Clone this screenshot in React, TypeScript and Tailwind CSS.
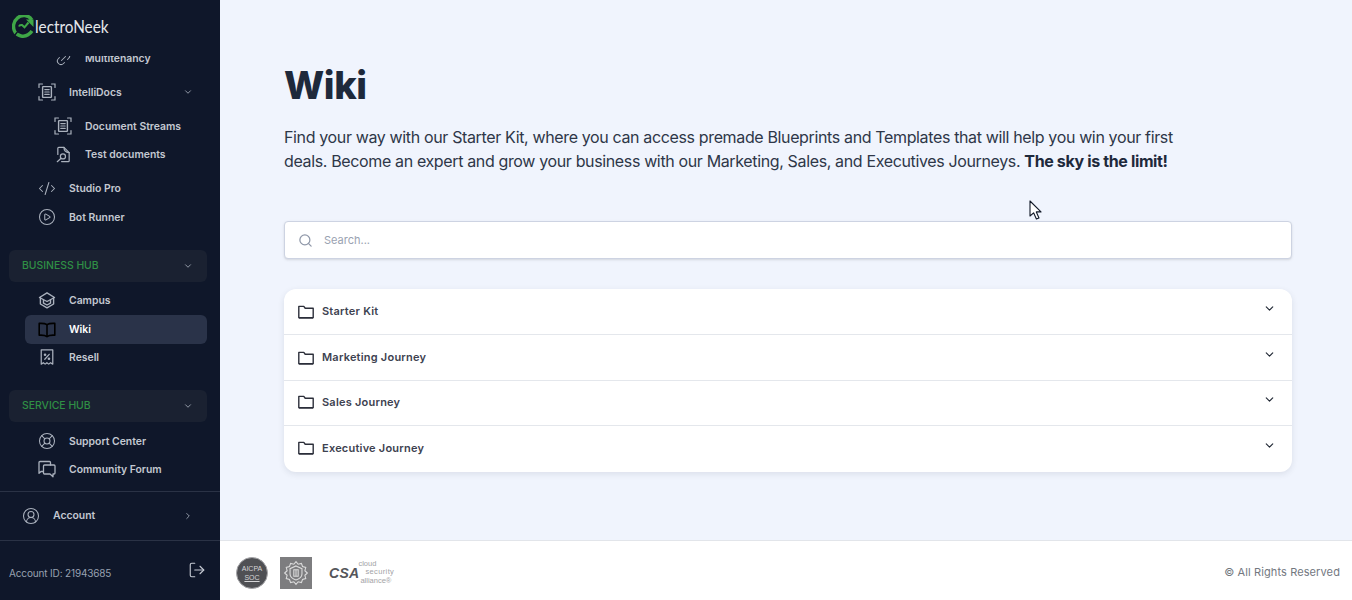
import React from "react";
import {
  ChevronDown, ChevronRight, Search, LifeBuoy, LogOut, CodeXml, CirclePlay, Link2, CircleUserRound,
} from "lucide-react";

const textCls = "text-[10.4px] font-semibold text-[#c3c8d1]";

function Scan({ size = 18 }: { size?: number }) {
  return (
    <svg width={size} height={size} viewBox="0 0 18 18" fill="none" stroke="currentColor" strokeWidth="1.2" strokeLinecap="round">
      <path d="M1 4.500V1h3.500M13.500 1H17v3.500M1 13.500V17h3.500M13.500 17H17v-3.500" />
      <rect x="4.600" y="3.600" width="8.800" height="10.800" rx=".6" strokeWidth="1.400" />
      <path d="M6.800 6.600h4.400M6.800 9h4.400M6.800 11.400h4.400" />
    </svg>
  );
}

function DocSearch({ size = 18 }: { size?: number }) {
  return (
    <svg width={size} height={size} viewBox="0 0 18 18" fill="none" stroke="currentColor" strokeWidth="1.300" strokeLinecap="round" strokeLinejoin="round">
      <path d="M3 9V2.500a1 1 0 0 1 1-1h5.500L15 7v8.500a1 1 0 0 1-1 1H7" />
      <path d="M9.500 1.500c0 3 1.500 5 5.500 5.500" />
      <circle cx="8.400" cy="11" r="2.700" />
      <path d="M6.400 13 2.400 16.600" />
    </svg>
  );
}

function Book({ size = 18 }: { size?: number }) {
  return (
    <svg width={size} height={size} viewBox="0 0 18 18" fill="none" stroke="currentColor" strokeWidth="1.600" strokeLinejoin="round">
      <path d="M9 3.600C7.400 2.600 4.400 2.200 1.200 2.400v11.800c3.200-.2 6.200.2 7.800 1.400 1.600-1.200 4.600-1.600 7.800-1.400V2.400C13.600 2.200 10.600 2.600 9 3.600Z" />
      <path d="M9 3.600v12" />
    </svg>
  );
}

function Chat({ size = 18 }: { size?: number }) {
  return (
    <svg width={size} height={size} viewBox="0 0 18 18" fill="none" stroke="currentColor" strokeWidth="1.300" strokeLinejoin="round" strokeLinecap="round">
      <path d="M5 11.500H3l-2 1.800V2.500a1 1 0 0 1 1-1h9.500a1 1 0 0 1 1 1V5" />
      <path d="M6.500 5H16a1 1 0 0 1 1 1v7a1 1 0 0 1-1 1h-1v2.800L12 14H6.500a1 1 0 0 1-1-1V6a1 1 0 0 1 1-1Z" />
    </svg>
  );
}

function Cap({ size = 18 }: { size?: number }) {
  return (
    <svg width={size} height={size} viewBox="0 0 18 18" fill="none" stroke="currentColor" strokeWidth="1.400" strokeLinejoin="round" strokeLinecap="round">
      <path d="M2.400 6.500V13L9 16.800l6.600-3.800V6.500" />
      <path d="M1.500 6.500 9 1.800l7.500 4.700L9 10.500Z" />
      <path d="M5.500 9v3.200L9 14l3.500-1.800V9" />
    </svg>
  );
}

function ReceiptPct({ size = 18 }: { size?: number }) {
  return (
    <svg width={size} height={size} viewBox="0 0 18 18" fill="none" stroke="currentColor" strokeWidth="1.400" strokeLinejoin="round" strokeLinecap="round">
      <path d="M2.500 1h13v16l-2.600-1.600-2 1.600-2-1.600-2 1.600-2-1.600-2.400 1.600Z" />
      <path d="M6.500 11.500 11.500 6" />
      <circle cx="6.800" cy="6.500" r=".8" />
      <circle cx="11.200" cy="11" r=".8" />
    </svg>
  );
}

function Row({ icon, label, sub, chevron, cls = "h-[28px]" }: { icon: React.ReactNode; label: string; sub?: boolean; chevron?: boolean; cls?: string }) {
  return (
    <div className={`flex items-center ${cls} ${sub ? "pl-[54px]" : "pl-[38px]"} pr-[27px]`}>
      <span className="w-[18px] h-[18px] flex items-center justify-center text-[#aab1bd] shrink-0">{icon}</span>
      <span className={`ml-[13px] flex-1 mt-[2px] ${textCls}`}>{label}</span>
      {chevron && <ChevronDown size={10} className="text-[#aab1bd]" />}
    </div>
  );
}

function Hub({ label, cls }: { label: string; cls: string }) {
  return (
    <div className={`mx-[9px] w-[198px] h-[32px] rounded-md bg-[#1a2131] flex items-center pl-[13px] pr-[14px] ${cls}`}>
      <span className="flex-1 text-[10.4px] font-medium text-[#2f8f45] mt-[-1px]">{label}</span>
      <ChevronDown size={10} className="text-[#aab1bd]" />
    </div>
  );
}

function Sidebar() {
  return (
    <aside className="w-[220px] h-[600px] shrink-0 bg-[#0f172a] flex flex-col">
      <div className="h-[56px] shrink-0 pl-[12px] pt-[15px] flex items-start">
        <svg width="23" height="23" viewBox="0 0 23 23" fill="none" className="shrink-0">
          <path d="M19.800 4.800A9.400 9.400 0 0 0 5.200 3.300C1 6.500.6 13 3 17c2.800 4.300 9 5.400 13 2.800 1.700-1 3-2.300 4-3.800" stroke="#3fa747" strokeWidth="3.400" />
          <path d="M1 22.500 10 11l3 2.800 6-7" stroke="#0f172a" strokeWidth="1.400" />
          <path d="M7 11.500c.5-1.500 1.500-1.800 3-1.500l2.500 2.300 4-4.800" stroke="#3fa747" strokeWidth="2" />
          <path d="M14 4.500h7.500V12Z" fill="#3fa747" />
        </svg>
        <span className="mt-[2px] text-[17px] leading-[20px] text-[#e4e7ea] font-['Lato',sans-serif] whitespace-nowrap origin-left scale-x-[0.9]">lectroNeek</span>
      </div>
      <nav className="h-[435px] shrink-0 overflow-hidden">
        <div className="mt-[-12px]">
          <Row sub icon={<Link2 size={17} strokeWidth={1.400} className="-rotate-45" />} label="Multitenancy" />
          <Row chevron cls="h-[28px] mt-[6px]" icon={<Scan />} label="IntelliDocs" />
          <Row sub cls="h-[28px] mt-[6px]" icon={<Scan />} label="Document Streams" />
          <Row sub icon={<DocSearch size={17} />} label="Test documents" />
          <Row cls="h-[28px] mt-[6px]" icon={<CodeXml size={19} strokeWidth={1.400} />} label="Studio Pro" />
          <Row cls="h-[28px] mt-[1px]" icon={<CirclePlay size={18} strokeWidth={1.400} />} label="Bot Runner" />
          <Hub label="BUSINESS HUB" cls="mt-[19px]" />
          <Row cls="h-[28px] mt-[4px]" icon={<Cap />} label="Campus" />
          <div className="ml-[25px] w-[182px] h-[29px] mt-[1px] rounded-md bg-[#2a3349] flex items-center pl-[13px]">
            <Book />
            <span className="ml-[13px] text-[10.4px] font-semibold text-white">Wiki</span>
          </div>
          <Row cls="h-[26px]" icon={<ReceiptPct size={16} />} label="Resell" />
          <Hub label="SERVICE HUB" cls="mt-[20px]" />
          <Row cls="h-[28px] mt-[5px]" icon={<LifeBuoy size={18} strokeWidth={1.400} />} label="Support Center" />
          <Row icon={<Chat />} label="Community Forum" />
        </div>
      </nav>
      <div className="h-[50px] shrink-0 border-t border-b border-[#2a3245] flex items-center pl-[22px] pr-[27px] box-border">
        <CircleUserRound size={18} strokeWidth={1.400} className="text-[#aab1bd]" />
        <span className={`ml-[13px] flex-1 mt-[-1px] ${textCls}`}>Account</span>
        <ChevronRight size={10} className="text-[#aab1bd]" />
      </div>
      <div className="flex-1 flex items-center justify-between pl-[9px] pr-[14px] pt-[3px]">
        <span className="text-[10px] tracking-[-0.15px] text-[#98a1b0] mt-[2px]">Account ID: 21943685</span>
        <LogOut size={18} strokeWidth={1.500} className="text-[#c5cad3] mt-[-4px]" />
      </div>
    </aside>
  );
}

function Folder() {
  return (
    <svg width="16" height="14" viewBox="0 0 16 14" fill="none" stroke="#2c2f3a" strokeWidth="1.400" strokeLinejoin="round" className="shrink-0">
      <path d="M.8 12.600V1.400h5l1.400 1.800h8v9.400Z" />
      <path d="M.8 12.900h14.400" strokeWidth="1.600" />
    </svg>
  );
}

function Accordion({ label, cls, chev }: { label: string; cls: string; chev: string }) {
  return (
    <div className={`flex items-center justify-between pl-[14px] pr-[16px] border-[#e4e7ec] ${cls}`}>
      <div className="flex items-center">
        <Folder />
        <span className="ml-[8px] text-[11px] font-semibold text-[#3d4250] tracking-[0.02em]">{label}</span>
      </div>
      <ChevronDown size={13} strokeWidth={2} className={`text-[#1f2733] ${chev}`} />
    </div>
  );
}

function Main() {
  return (
    <div className="flex-1 h-[600px] flex flex-col bg-[#f0f4fd]">
      <main className="flex-1 pl-[64px] pr-[60px] pt-[62px] relative">
        <h1 className="text-[38px] leading-[46px] font-extrabold text-[#1e293b] tracking-[-0.01em]">Wiki</h1>
        <p className="mt-[17px] w-[920px] text-[16px] leading-[24px] tracking-[-0.36px] text-[#2e3748]">
          Find your way with our Starter Kit, where you can access premade Blueprints and Templates that will help you win your first deals. Become an expert and grow your business with our Marketing, Sales, and Executives Journeys. <strong className="font-bold text-[#1e293b]">The sky is the limit!</strong>
        </p>
        <div className="mt-[48px] h-[38px] rounded-[4px] bg-white border border-[#cdd3e2] shadow-sm flex items-center pl-[14px]">
          <Search size={15} strokeWidth={2} className="text-[#8f97a8] ml-[-1px]" />
          <span className="ml-[11px] text-[11px] text-[#9aa2b1]">Search...</span>
        </div>
        <div className="mt-[30px] rounded-xl bg-white shadow-[0_2px_6px_rgba(30,40,60,0.1)]">
          <Accordion label="Starter Kit" cls="h-[45px]" chev="mt-[-7px]" />
          <Accordion label="Marketing Journey" cls="h-[46px] border-t" chev="mt-[-7px]" />
          <Accordion label="Sales Journey" cls="h-[45px] border-t pb-[2px]" chev="mt-[-5px]" />
          <Accordion label="Executive Journey" cls="h-[47px] border-t pb-[2px]" chev="mt-[-5px]" />
        </div>
        <svg width="14" height="21" viewBox="0 0 14 21" className="absolute left-[809px] top-[200px]">
          <path d="M1 1v15l3.600-3.200L7.400 19l2.600-1.100-2.700-6H12Z" fill="#fff" stroke="#111827" strokeWidth="1.100" strokeLinejoin="round" />
        </svg>
      </main>
      <footer className="h-[60px] shrink-0 bg-white border-t border-[#e2e5ea] flex items-center pl-[16px] pr-[12px] pt-[5px]">
        <div className="w-[32px] h-[32px] rounded-full bg-[#4f5054] border border-[#a5a5a8] flex flex-col items-center justify-center text-[7px] leading-[9px] text-[#d6d6d8] font-['Liberation_Sans',sans-serif]">
          <span>AICPA</span>
          <span className="underline">SOC</span>
        </div>
        <div className="ml-[12px] w-[32px] h-[32px] bg-[#7d7d7f] flex items-center justify-center">
          <svg width="26" height="26" viewBox="0 0 24 24" fill="none" stroke="#dcdcdc" strokeWidth="1">
            <path d="M12 1.500l2 2.400 3-.8 1 2.900 3 .9-.8 3L22.500 12l-2.300 2.100.8 3-3 .9-1 2.900-3-.8-2 2.400-2-2.400-3 .8-1-2.900-3-.9.8-3L1.500 12l2.300-2.100-.8-3 3-.9 1-2.900 3 .8Z" />
            <path d="M12 5.500l5.500 2.500v5c0 2.500-2.500 4.500-5.500 5.500-3-1-5.500-3-5.500-5.500V8Z" />
            <path d="M10 9h4v6h-4Z M12 9v6" />
          </svg>
        </div>
        <div className="ml-[17px] flex items-center">
          <span className="text-[14px] font-black text-[#55565a] font-['Liberation_Sans',sans-serif] tracking-[0.02em] italic">CSA</span>
          <div className="flex flex-col text-[7.5px] leading-[8.500px] text-[#a3a3a6] font-['Liberation_Sans',sans-serif] mt-[-1px]">
            <span className="ml-[-1px]">cloud</span>
            <span className="ml-[6px] tracking-[0.05em]">security</span>
            <span className="ml-[1px]">alliance®</span>
          </div>
        </div>
        <span className="ml-auto text-[11px] text-[#73787f] tracking-[0.01em] mt-[-2px]">© All Rights Reserved</span>
      </footer>
    </div>
  );
}

export default function App() {
  return (
    <div className="w-[1352px] h-[600px] flex overflow-hidden font-['Inter',sans-serif]">
      <Sidebar />
      <Main />
    </div>
  );
}
